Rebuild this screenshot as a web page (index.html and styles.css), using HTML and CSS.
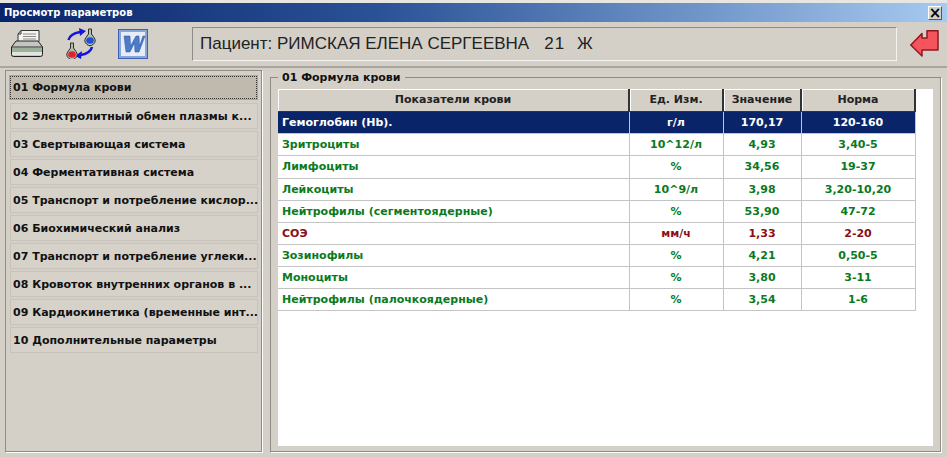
FILE: index.html
```html
<!DOCTYPE html>
<html lang="ru">
<head>
<meta charset="utf-8">
<title>Просмотр параметров</title>
<link rel="stylesheet" href="styles.css">
</head>
<body>
<div class="window">
  <header class="titlebar">
    <span class="title">Просмотр параметров</span>
    <span class="close">×</span>
  </header>
  <div class="toolbar">
    <div class="tools">
      <svg class="icon printer" width="32" height="27" viewBox="0 0 32 27">
        <path d="M10 .5h18v11H7V4z" fill="#f4f4f0" stroke="#333"/>
        <path d="M7 4h3V.5" fill="none" stroke="#333"/>
        <path d="M12 4h13M12 6.500h13M12 9h13" stroke="#8a8a8a"/>
        <path d="M5 11h22l4.500 6v7.500a2 2 0 0 1-2 2h-27a2 2 0 0 1-2-2V17z" fill="#c4c7c1" stroke="#222"/>
        <path d="M1 18h30v4H1z" fill="#9db09a"/>
        <path d="M1 22h30v3H1z" fill="#e2e4de"/>
        <path d="M1 17h30" stroke="#333"/>
      </svg>
      <svg class="icon flasks" width="32" height="31" viewBox="0 0 32 31">
        <path d="M3.500 12C4.500 8 9 5 15 4" fill="none" stroke="#1616d8" stroke-width="2.600"/>
        <path d="M14 0l7 3-6 5z" fill="#1616d8"/>
        <path d="M27 19c-1 4-5.500 7-11 8" fill="none" stroke="#1616d8" stroke-width="2.600"/>
        <path d="M17 23l-7 5 6 3z" fill="#1616d8"/>
        <path d="M23.500 1h3v5l2.500 3.500a5 5 0 1 1-8 0L23.500 6z" fill="#aebfae" stroke="#2c2c2c"/>
        <ellipse cx="25" cy="12.500" rx="3.800" ry="3.200" fill="#2050d8"/>
        <path d="M5.500 15h3v5l2.500 3.500a5 5 0 1 1-8 0L5.500 20z" fill="#aebfae" stroke="#2c2c2c"/>
        <ellipse cx="7" cy="26.500" rx="3.800" ry="3.200" fill="#e52030"/>
      </svg>
      <svg class="icon word" width="30" height="30" viewBox="0 0 30 30">
        <rect x=".5" y=".5" width="29" height="29" fill="#d7e3f6" stroke="#3a62b0"/>
        <rect x="2" y="2" width="26" height="26" fill="#e6edf9" stroke="#8aa6d8" stroke-width="2"/>
        <path d="M6 7h6l.5 10L18 7h3l.5 10L25 7h2l-6 16h-4l-.5-9-4.500 9H8z" fill="#4c7cc8" stroke="#2a4f9c" stroke-width=".5"/>
      </svg>
    </div>
    <div class="patient">
      <span>Пациент: РИМСКАЯ ЕЛЕНА СЕРГЕЕВНА</span>
      <span class="age">21</span>
      <span class="sex">Ж</span>
    </div>
    <svg class="icon back" width="29" height="27" viewBox="0 0 29 27">
      <path d="M.8 15 12 3.500V8h5V.8h11V20H12v6z" fill="#f4545c" stroke="#8a1a20" stroke-width="1.500" stroke-linejoin="round"/>
    </svg>
  </div>
  <div class="main">
    <nav class="sidebar">
      <div class="nav-item active">01 Формула крови</div>
      <div class="nav-item">02 Электролитный обмен плазмы к...</div>
      <div class="nav-item">03 Свертывающая система</div>
      <div class="nav-item">04 Ферментативная система</div>
      <div class="nav-item">05 Транспорт и потребление кислор...</div>
      <div class="nav-item">06 Биохимический анализ</div>
      <div class="nav-item">07 Транспорт и потребление углеки...</div>
      <div class="nav-item">08 Кровоток внутренних органов в ...</div>
      <div class="nav-item">09 Кардиокинетика (временные инт...</div>
      <div class="nav-item">10 Дополнительные параметры</div>
    </nav>
    <section class="panel">
      <div class="legend">01 Формула крови</div>
      <div class="sheet">
        <table class="grid">
          <colgroup><col class="c1"><col class="c2"><col class="c3"><col class="c4"></colgroup>
          <thead>
            <tr><th>Показатели крови</th><th>Ед. Изм.</th><th>Значение</th><th>Норма</th></tr>
          </thead>
          <tbody>
            <tr class="selected"><td>Гемоглобин (Hb).</td><td>г/л</td><td>170,17</td><td>120-160</td></tr>
            <tr><td>Зритроциты</td><td>10^12/л</td><td>4,93</td><td>3,40-5</td></tr>
            <tr class="tall"><td>Лимфоциты</td><td>%</td><td>34,56</td><td>19-37</td></tr>
            <tr><td>Лейкоциты</td><td>10^9/л</td><td>3,98</td><td>3,20-10,20</td></tr>
            <tr><td>Нейтрофилы (сегментоядерные)</td><td>%</td><td>53,90</td><td>47-72</td></tr>
            <tr class="alert"><td>СОЭ</td><td>мм/ч</td><td>1,33</td><td>2-20</td></tr>
            <tr><td>Зозинофилы</td><td>%</td><td>4,21</td><td>0,50-5</td></tr>
            <tr><td>Моноциты</td><td>%</td><td>3,80</td><td>3-11</td></tr>
            <tr><td>Нейтрофилы (палочкоядерные)</td><td>%</td><td>3,54</td><td>1-6</td></tr>
          </tbody>
        </table>
      </div>
    </section>
  </div>
</div>
</body>
</html>
```
FILE: styles.css
```css
* { box-sizing: border-box; }
html, body { margin: 0; height: 100%; }
body { background: #d4d0c8; overflow: hidden; }
.window {
  width: 947px; height: 457px; display: flex; flex-direction: column;
  background: #d4d0c8; border-top: 3px solid #e8e6e0;
  font: bold 11px "DejaVu Sans", sans-serif; color: #111;
}
.titlebar {
  height: 19px; flex: none; display: flex; align-items: center; justify-content: space-between;
  padding: 0 5px 0 4px; background: linear-gradient(90deg, #0a246a 0%, #2a5296 40%, #a6caf0 100%);
  color: #fff;
}
.title { font-size: 10px; }
.close {
  width: 14px; height: 14px; display: flex; align-items: center; justify-content: center;
  background: #d4d0c8; color: #000; font-size: 15px; line-height: 14px;
  border: 1px solid; border-color: #fff #555 #555 #fff;
}
.toolbar {
  height: 46px; flex: none; display: flex; align-items: center; padding: 0 9px 1px 11px;
  border-bottom: 2px solid #a9a69e;
}
.tools { display: flex; align-items: center; width: 181px; flex: none; }
.icon { flex: none; display: block; }
.printer { margin-right: 22px; }
.flasks { margin-right: 21px; }
.patient {
  width: 705px; height: 34px; flex: none; display: flex; align-items: center; padding: 0 7px;
  font: 400 17px "Liberation Sans", sans-serif; color: #222;
  border: 1px solid; border-color: #8f8c85 #f4f3ef #f4f3ef #8f8c85;
}
.age { margin-left: 15px; letter-spacing: 1px; }
.sex { margin-left: 12px; }
.back { margin-left: 13px; }
.main { flex: 1; min-height: 0; display: flex; gap: 7px; padding: 2px 5px 4px; }
.sidebar {
  width: 258px; flex: none; display: flex; flex-direction: column; gap: 2px; padding: 4px;
  border: 1px solid; border-color: #8f8c85 #fff #fff #8f8c85;
  box-shadow: inset -1px -1px 0 #8f8c85;
}
.nav-item {
  height: 26px; flex: none; display: flex; align-items: center; padding-left: 2px;
  white-space: nowrap; border: 1px solid #c7c3bb; background: #d6d2ca;
}
.nav-item.active {
  height: 23px; margin: 1px 1px 2px 0; background: #c0b9ae;
  border: 1px dotted #333; outline: 1px solid #a9a69e;
}
.panel {
  flex: 1; min-width: 0; position: relative; padding: 11px 8px 6px 7px; margin-top: 7px;
  border: 1px solid; border-color: #8f8c85 #fff #fff #8f8c85;
  box-shadow: inset -1px -1px 0 #8f8c85;
}
.legend {
  position: absolute; left: 7px; top: -6px; padding: 0 4px; background: #d4d0c8; line-height: 12px;
}
.sheet { height: 100%; background: #fff; }
.grid { width: 637px; table-layout: fixed; border-collapse: collapse; }
.c1 { width: 351px; } .c2 { width: 94px; } .c3 { width: 78px; } .c4 { width: 114px; }
.grid th {
  height: 22px; padding: 0; font-weight: bold; text-align: center; color: #222; background: #d4d0c8;
  border-right: 2px solid #333; border-bottom: 1px solid #333; box-shadow: inset 1px 1px 0 #fff;
}
.grid td {
  height: 22px; padding: 0; text-align: center; color: #0b7a1e;
  border-right: 1px solid #c4c4c4; border-bottom: 1px solid #c4c4c4;
}
.grid .tall td { height: 23px; }
.grid td:first-child { text-align: left; padding-left: 4px; }
.grid .selected td { background: #0a246a; color: #fff; }
.grid .alert td { color: #8b0f14; }
```
